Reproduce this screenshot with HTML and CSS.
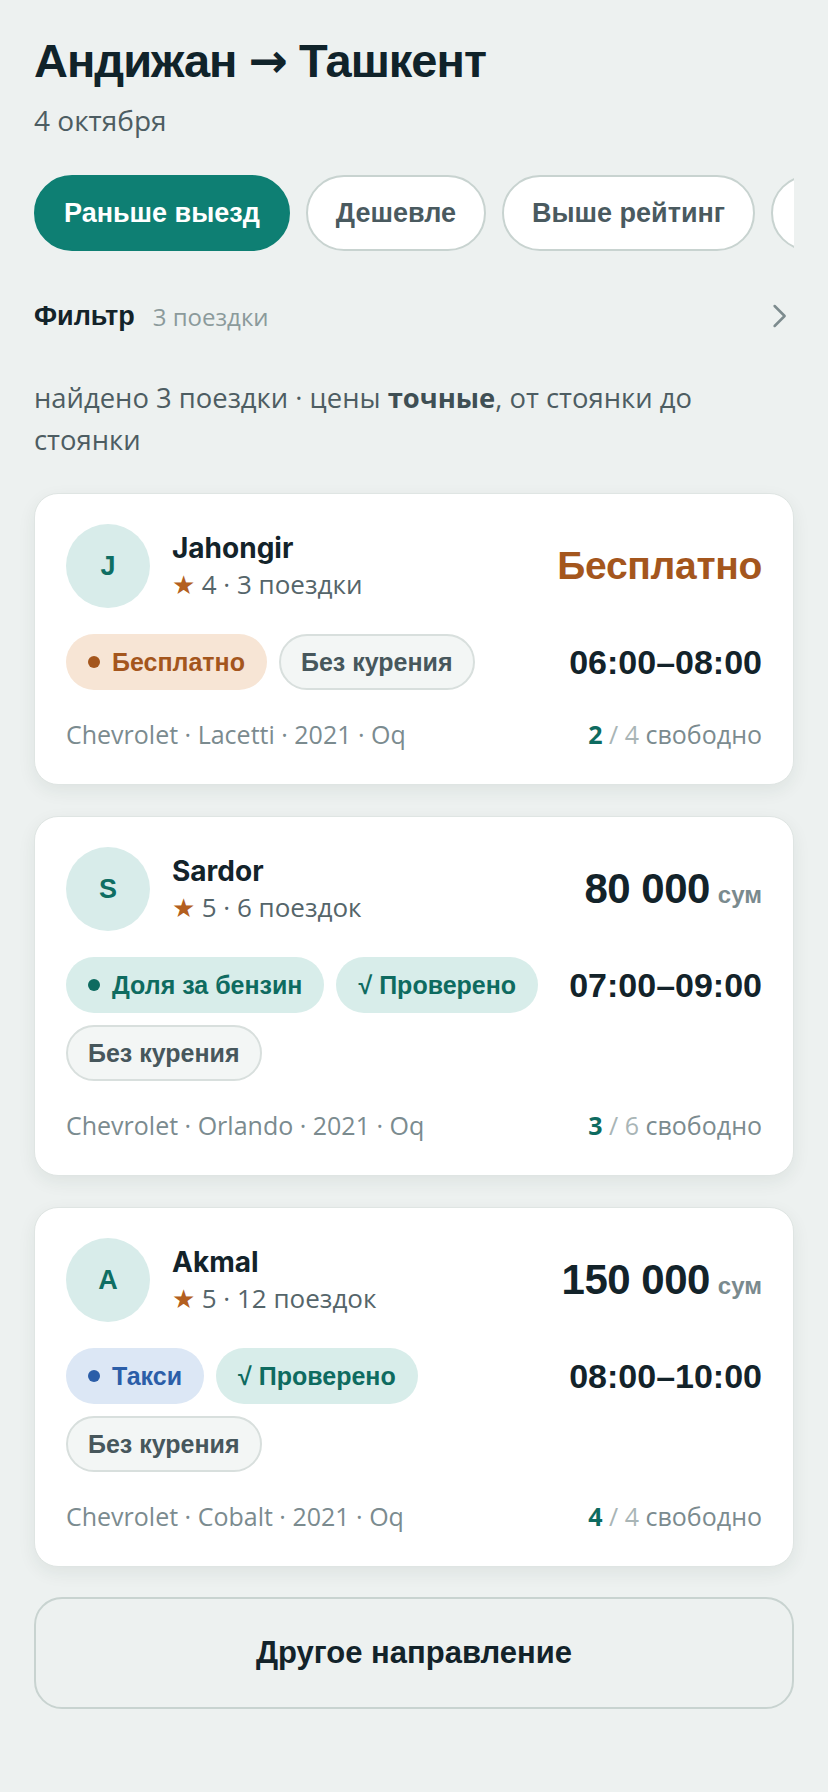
FILE: index.html
```html
<!DOCTYPE html>
<html lang="ru">
<head>
    <meta charset="UTF-8">
    <meta name="viewport" content="width=device-width, initial-scale=1.0">
    <title>Андижан → Ташкент</title>
    <link rel="stylesheet" href="styles.css">
</head>
<body>
    <div class="page">
        <h1 class="route">Андижан <span class="arrow">→</span> Ташкент</h1>
        <div class="date">4 октября</div>

        <div class="sorts">
            <div class="sort active">Раньше выезд</div>
            <div class="sort">Дешевле</div>
            <div class="sort">Выше рейтинг</div>
            <div class="sort">Больше мест</div>
        </div>

        <div class="filter">
            <span class="filter-title">Фильтр</span>
            <span class="filter-count">3 поездки</span>
            <svg class="filter-arrow" width="30" height="30" viewBox="0 0 24 24">
                <path d="M8.5 4l8 8-8 8" fill="none" stroke="#7d8b8e" stroke-width="2" stroke-linecap="round" stroke-linejoin="round"/>
            </svg>
        </div>

        <p class="note">найдено 3 поездки · цены <b>точные</b>, от стоянки до стоянки</p>

        <div class="trips">
            <div class="card">
                <div class="card-head">
                    <div class="avatar">J</div>
                    <div class="who">
                        <div class="name">Jahongir</div>
                        <div class="rating"><span class="star">★</span> 4 · 3 поездки</div>
                    </div>
                    <div class="price free">Бесплатно</div>
                </div>
                <div class="card-mid">
                    <div class="tags">
                        <span class="tag tag-free"><span class="dot"></span>Бесплатно</span>
                        <span class="tag tag-plain">Без курения</span>
                    </div>
                    <div class="time">06:00–08:00</div>
                </div>
                <div class="card-foot">
                    <span>Chevrolet · Lacetti · 2021 · Oq</span>
                    <span class="seats"><b>2</b> <span class="of">/ 4</span> свободно</span>
                </div>
            </div>

            <div class="card">
                <div class="card-head">
                    <div class="avatar">S</div>
                    <div class="who">
                        <div class="name">Sardor</div>
                        <div class="rating"><span class="star">★</span> 5 · 6 поездок</div>
                    </div>
                    <div class="price">80 000<small>сум</small></div>
                </div>
                <div class="card-mid">
                    <div class="tags">
                        <span class="tag tag-green"><span class="dot"></span>Доля за бензин</span>
                        <span class="tag tag-green">√ Проверено</span>
                        <span class="tag tag-plain">Без курения</span>
                    </div>
                    <div class="time">07:00–09:00</div>
                </div>
                <div class="card-foot">
                    <span>Chevrolet · Orlando · 2021 · Oq</span>
                    <span class="seats"><b>3</b> <span class="of">/ 6</span> свободно</span>
                </div>
            </div>

            <div class="card">
                <div class="card-head">
                    <div class="avatar">A</div>
                    <div class="who">
                        <div class="name">Akmal</div>
                        <div class="rating"><span class="star">★</span> 5 · 12 поездок</div>
                    </div>
                    <div class="price">150 000<small>сум</small></div>
                </div>
                <div class="card-mid">
                    <div class="tags">
                        <span class="tag tag-taxi"><span class="dot"></span>Такси</span>
                        <span class="tag tag-green">√ Проверено</span>
                        <span class="tag tag-plain">Без курения</span>
                    </div>
                    <div class="time">08:00–10:00</div>
                </div>
                <div class="card-foot">
                    <span>Chevrolet · Cobalt · 2021 · Oq</span>
                    <span class="seats"><b>4</b> <span class="of">/ 4</span> свободно</span>
                </div>
            </div>
        </div>

        <button class="other" type="button">Другое направление</button>
    </div>
</body>
</html>
```

FILE: styles.css
```css
body {
    margin: 0;
    background-color: #edf1f0;
    font-family: 'Open Sans', sans-serif;
    color: #13232a;
}
.page {
    padding: 35px 34px 60px;
}
.route {
    margin: 0;
    font: 700 47px/52px 'Liberation Sans', Arial, sans-serif;
    letter-spacing: -1px;
    color: #10232a;
}
.arrow {
    font-family: 'DejaVu Sans', sans-serif;
}
.date {
    margin-top: 15px;
    font-size: 28px;
    line-height: 36px;
    color: #4d5d62;
}
.sorts {
    display: flex;
    gap: 16px;
    margin-top: 37px;
    overflow: hidden;
}
.sort {
    flex: none;
    display: flex;
    align-items: center;
    height: 76px;
    box-sizing: border-box;
    padding: 0 28px;
    border: 2px solid #c8d3d0;
    border-radius: 38px;
    background-color: #ffffff;
    font: 700 27px 'Liberation Sans', Arial, sans-serif;
    color: #4a5a5f;
}
.sort.active {
    background-color: #0e7f73;
    border-color: #0e7f73;
    color: #ffffff;
}
.filter {
    display: flex;
    align-items: center;
    height: 40px;
    margin-top: 45px;
}
.filter-title {
    font: 700 27px 'Liberation Sans', Arial, sans-serif;
    color: #13232a;
}
.filter-count {
    margin-left: 18px;
    font-size: 24px;
    color: #8b9a9b;
}
.filter-arrow {
    margin-left: auto;
}
.note {
    margin: 41px 0 0;
    font-size: 27.4px;
    line-height: 42px;
    color: #4d5d62;
}
.note b {
    color: #3f4f54;
}
.trips {
    display: flex;
    flex-direction: column;
    gap: 31px;
    margin-top: 32px;
}
.card {
    background-color: #ffffff;
    border: 1px solid #dfe5e3;
    border-radius: 24px;
    padding: 30px 31px 34px;
    box-shadow: 0 6px 18px rgba(30, 50, 45, 0.07);
}
.card-head {
    display: flex;
    align-items: center;
    gap: 22px;
}
.avatar {
    flex: none;
    width: 84px;
    height: 84px;
    border-radius: 50%;
    background-color: #d8ecea;
    color: #0f6e63;
    font: 700 27px 'Liberation Sans', Arial, sans-serif;
    display: flex;
    align-items: center;
    justify-content: center;
}
.who {
    flex: 1;
}
.name {
    font: 700 28px/36px 'Inter', sans-serif;
    color: #13232a;
}
.rating {
    font-size: 26px;
    line-height: 36px;
    color: #55656a;
}
.star {
    color: #b35f20;
}
.price {
    font: 700 42px 'Liberation Sans', Arial, sans-serif;
    letter-spacing: -0.5px;
    color: #13232a;
    white-space: nowrap;
}
.price small {
    margin-left: 8px;
    font-size: 24px;
    letter-spacing: 0;
    color: #7a8a8e;
}
.price.free {
    font-size: 39px;
    letter-spacing: -0.3px;
    color: #a4561d;
}
.card-mid {
    display: flex;
    align-items: flex-start;
    gap: 24px;
    margin-top: 26px;
}
.tags {
    flex: 1;
    display: flex;
    flex-wrap: wrap;
    gap: 12px;
}
.tag {
    display: inline-flex;
    align-items: center;
    gap: 12px;
    height: 56px;
    box-sizing: border-box;
    padding: 0 20px;
    border: 2px solid transparent;
    border-radius: 28px;
    font: 700 25px 'Liberation Sans', Arial, sans-serif;
}
.dot {
    width: 12px;
    height: 12px;
    border-radius: 50%;
    background-color: currentColor;
}
.tag-free {
    background-color: #f7e5d5;
    color: #a4561d;
}
.tag-green {
    background-color: #d8edea;
    color: #0e6b60;
}
.tag-taxi {
    background-color: #dce7f5;
    color: #2b5ea8;
}
.tag-plain {
    background-color: #f3f6f5;
    border-color: #d8dfdd;
    color: #47575c;
}
.time {
    flex: none;
    font: 700 34px/56px 'Liberation Sans', Arial, sans-serif;
    color: #13232a;
}
.card-foot {
    display: flex;
    justify-content: space-between;
    align-items: baseline;
    margin-top: 28px;
    font-size: 25px;
    line-height: 32px;
    color: #7b8b8f;
}
.seats b {
    color: #0e6b60;
}
.seats .of {
    color: #a9b5b6;
}
.other {
    display: block;
    width: 100%;
    height: 112px;
    margin-top: 30px;
    border: 2px solid #c8d3d0;
    border-radius: 28px;
    background-color: transparent;
    font: 700 31px 'Liberation Sans', Arial, sans-serif;
    color: #13232a;
    cursor: pointer;
}
```
